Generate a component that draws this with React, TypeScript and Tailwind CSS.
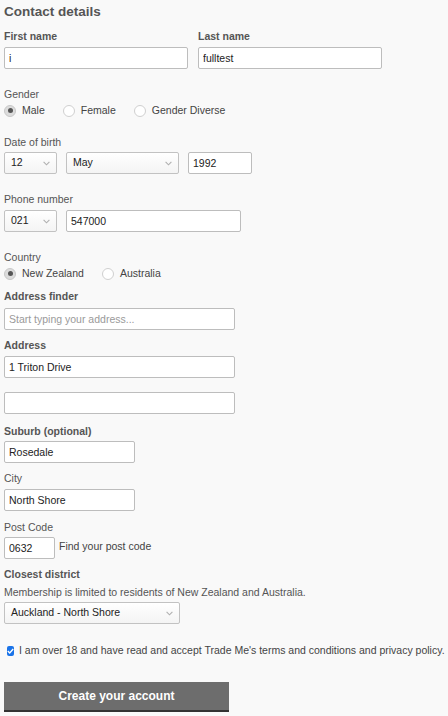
const font = { fontFamily: '"Liberation Sans", Arial, sans-serif' };

function Label({ text, bold = false, className = '' }: { text: string; bold?: boolean; className?: string }) {
  return (
    <div className={`text-[10.5px] leading-[13px] text-[#555] ${bold ? 'font-bold' : ''} ${className}`}>{text}</div>
  );
}

function TextBox({ value = '', placeholder, className = '' }: { value?: string; placeholder?: string; className?: string }) {
  return (
    <input
      readOnly
      value={value}
      placeholder={placeholder}
      className={`h-[22px] rounded-[2px] border border-[#bdbdbd] bg-white pl-[4px] text-[10.5px] text-[#222] outline-none placeholder:text-[#9a9a9a] ${className}`}
      style={font}
    />
  );
}

function Select({ value, className = '' }: { value: string; className?: string }) {
  return (
    <div
      className={`flex h-[22px] items-center justify-between rounded-[2px] border border-[#c2c2c2] bg-gradient-to-b from-white to-[#f4f4f4] pl-[6px] pr-[6px] text-[10.5px] text-[#222] ${className}`}
    >
      <span>{value}</span>
      <svg width="7" height="5" viewBox="0 0 7 5" fill="none">
        <path d="M0.6 0.8 L3.5 3.8 L6.4 0.8" stroke="#b0b0b0" strokeWidth="1.1" />
      </svg>
    </div>
  );
}

function Radio({ label, checked = false }: { label: string; checked?: boolean }) {
  return (
    <div className="flex items-center gap-[6px]">
      {checked ? (
        <span className="flex h-[12px] w-[12px] items-center justify-center rounded-full border border-[#c8c8c8] bg-[#dcdcdc]">
          <span className="h-[5px] w-[5px] rounded-full bg-[#555]" />
        </span>
      ) : (
        <span className="h-[12px] w-[12px] rounded-full border border-[#d0d0d0] bg-white" />
      )}
      <span className="text-[10.5px] leading-[13px] text-[#444]">{label}</span>
    </div>
  );
}

export default function App() {
  return (
    <div className="min-h-[716px] w-[448px] bg-[#f9f9f9] px-[4px] pt-[4px]" style={font}>
      <h2 className="text-[13.5px] font-bold leading-[16px] text-[#555]">Contact details</h2>

      <div className="mt-[10px] flex gap-[10px]">
        <div className="flex flex-col">
          <Label text="First name" bold />
          <TextBox value="i" className="mt-[4px] w-[184px]" />
        </div>
        <div className="flex flex-col">
          <Label text="Last name" bold />
          <TextBox value="fulltest" className="mt-[4px] w-[184px]" />
        </div>
      </div>

      <Label text="Gender" className="mt-[19px]" />
      <div className="mt-[3px] flex gap-[18px]">
        <Radio label="Male" checked />
        <Radio label="Female" />
        <Radio label="Gender Diverse" />
      </div>

      <Label text="Date of birth" className="mt-[19px]" />
      <div className="mt-[3px] flex gap-[9px]">
        <Select value="12" className="w-[53px]" />
        <Select value="May" className="w-[113px]" />
        <TextBox value="1992" className="w-[64px]" />
      </div>

      <Label text="Phone number" className="mt-[19px]" />
      <div className="mt-[4px] flex gap-[9px]">
        <Select value="021" className="w-[53px]" />
        <TextBox value="547000" className="w-[175px]" />
      </div>

      <Label text="Country" className="mt-[19px]" />
      <div className="mt-[3px] flex gap-[18px]">
        <Radio label="New Zealand" checked />
        <Radio label="Australia" />
      </div>

      <Label text="Address finder" bold className="mt-[10px]" />
      <TextBox placeholder="Start typing your address..." className="mt-[5px] block w-[231px]" />

      <Label text="Address" bold className="mt-[9px]" />
      <TextBox value="1 Triton Drive" className="mt-[4px] block w-[231px]" />
      <TextBox className="mt-[14px] block w-[231px]" />

      <Label text="Suburb (optional)" bold className="mt-[11px]" />
      <TextBox value="Rosedale" className="mt-[3px] block w-[131px]" />

      <Label text="City" className="mt-[9px]" />
      <TextBox value="North Shore" className="mt-[4px] block w-[131px]" />

      <Label text="Post Code" className="mt-[10px]" />
      <div className="mt-[3px] flex items-center gap-[4px]">
        <TextBox value="0632" className="w-[51px]" />
        <span className="-mt-[3px] text-[10.5px] leading-[13px] text-[#444]">Find your post code</span>
      </div>

      <Label text="Closest district" bold className="mt-[9px]" />
      <div className="mt-[5px] text-[10.5px] leading-[13px] text-[#555]">
        Membership is limited to residents of New Zealand and Australia.
      </div>
      <Select value="Auckland - North Shore" className="mt-[3px] w-[176px]" />

      <div className="mt-[20px] flex items-center gap-[5px] pl-[3px]">
        <span className="flex h-[10px] w-[9px] items-center justify-center rounded-[2px] bg-[#1a73e8]">
          <svg width="7" height="6" viewBox="0 0 7 6" fill="none">
            <path d="M0.8 3 L2.7 4.9 L6.2 1" stroke="white" strokeWidth="1.4" />
          </svg>
        </span>
        <span className="whitespace-nowrap text-[10.5px] leading-[13px] text-[#444]">
          I am over 18 and have read and accept Trade Me's terms and conditions and privacy policy.
        </span>
      </div>

      <button className="mt-[25px] flex h-[30px] w-[225px] items-center justify-center border-b-2 border-[#333] bg-[#6d6d6d] text-[12px] font-bold text-white">
        Create your account
      </button>
    </div>
  );
}
